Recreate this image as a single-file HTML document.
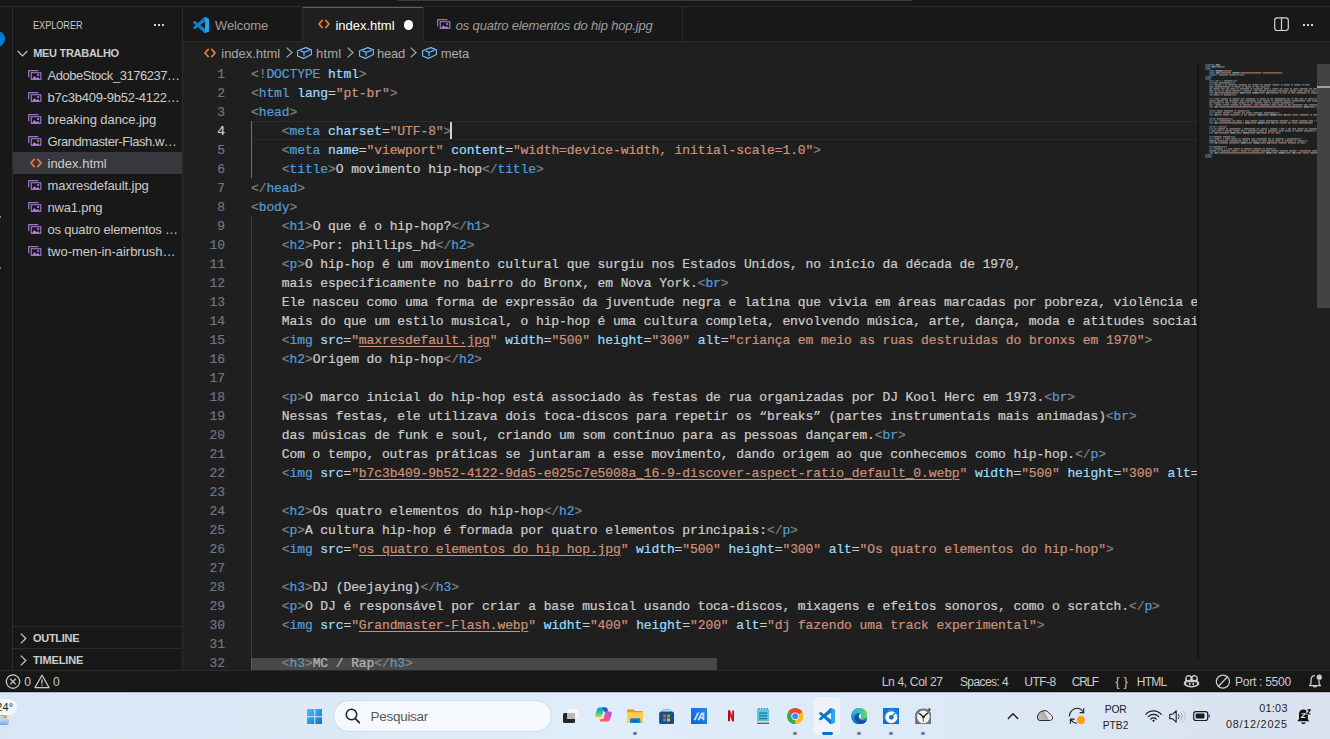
<!DOCTYPE html>
<html lang="pt-br">
<head>
<meta charset="UTF-8">
<title>index.html - meu trabalho - Visual Studio Code</title>
<style>
*{box-sizing:border-box;margin:0;padding:0}
html,body{width:1330px;height:739px;overflow:hidden;background:#181818}
body{position:relative;font-family:"Liberation Sans",sans-serif;font-size:13px;color:#ccc}
.abs{position:absolute}
.t{position:absolute;white-space:nowrap}
.dots{display:flex;gap:2px}
.dots i{display:block;width:2.2px;height:2.2px;background:#d4d4d4}
#titlebar{left:0;top:0;width:1330px;height:7px;background:#181818;border-bottom:1px solid #2b2b2b}
#cmd{left:397px;top:0;width:515px;height:1px;background:#3a3a3a}
#activity{left:0;top:7px;width:13px;height:663px;background:#181818;border-right:1px solid #2b2b2b;overflow:hidden}
#badge{left:-10.900px;top:24px;width:16px;height:15.600px;border-radius:50%;background:#0078d4}
#sidebar{left:13px;top:7px;width:170px;height:663px;background:#181818;border-right:1px solid #2b2b2b}
#editor{left:183px;top:7px;width:1147px;height:663px;background:#1f1f1f}
#status{left:0;top:670px;width:1330px;height:22px;background:#181818;border-top:1px solid #2b2b2b;border-bottom:1px solid #0e0e0e}
#taskbar{left:0;top:692px;width:1330px;height:47px;background:linear-gradient(90deg,#d7e7f5,#dfecf9 44%,#dde9f7 72%,#d9e2ee);border-top:1px solid #b3bac3}
/* code */
#codewrap{left:183px;top:64px;width:1014px;height:606px;overflow:hidden}
#nums{left:0;top:1px;width:42px;text-align:right;color:#6e7681}
#nums div,.ln{height:19px;line-height:19px;white-space:pre}
#nums .cur{color:#ccc}
#code{left:68px;top:1px;color:#ccc}
#nums,#code{font-family:"Liberation Mono",monospace;font-size:13px;letter-spacing:-0.1px;-webkit-text-stroke:0.22px}
.g{color:#808080}.k{color:#569cd6}.a{color:#9cdcfe}.s{color:#ce9178}.u{color:#ce9178;text-decoration:underline;text-underline-offset:2px}
#curline{left:68px;top:57px;width:950px;height:19px;border:1px solid #2a2a2a}
#cursor{left:267px;top:58px;width:2px;height:17px;background:#cfcfcf}
.guide{width:1px;background:#404040}
#mmshadow{left:1196.500px;top:64px;width:4px;height:594px;background:linear-gradient(90deg,rgba(0,0,0,.4),rgba(0,0,0,0))}
#vslider{left:1317px;top:64px;width:13px;height:244px;background:#434343}
#vmark{left:1317px;top:86px;width:13px;height:2px;background:#a0a0a0}
#hslider{left:251px;top:658px;width:466px;height:12px;background:rgba(140,140,140,.38)}
</style>
</head>
<body>
<div id="titlebar" class="abs"></div>
<div id="cmd" class="abs"></div>
<div id="activity" class="abs"><div id="badge" class="abs"></div><div class="abs" style="left:0;top:208.500px;width:1.200px;height:2.500px;background:#8a8a8a"></div><div class="abs" style="left:0;top:260px;width:1px;height:2px;background:#777"></div></div>
<div id="sidebar" class="abs"></div>
<div id="editor" class="abs"></div>
<span class="t" style="left:33.2px;top:17.0px;line-height:16px;font-size:11px;color:#ccc;transform:scaleX(0.8279);transform-origin:0 0;">EXPLORER</span>
<div class="abs dots" style="left:153.5px;top:23.7px"><i></i><i></i><i></i></div>
<svg class="abs" style="left:17.2px;top:49.7px" width="11" height="7" viewBox="0 0 11 7"><path d="M0.6 0.8L5.5 5.8L10.4 0.8" stroke="#ccc" stroke-width="1.2" fill="none"/></svg>
<span class="t" style="left:33.2px;top:44.6px;line-height:16px;font-size:11px;color:#ccc;font-weight:bold;letter-spacing:-0.293px;">MEU TRABALHO</span>
<div class="abs" style="left:13px;top:152px;width:169px;height:22px;background:#37373d"></div>
<svg class="abs" style="left:28.2px;top:69.7px" width="13.5" height="10.5" viewBox="0 0 13.5 10.5"><path d="M0.700 7.300V0.700H10.400" stroke="#a074c4" stroke-width="1.250" fill="none"/><rect x="3.300" y="2.700" width="9.500" height="7.200" stroke="#a074c4" stroke-width="1.150" fill="none"/><path d="M3.600 9.800L6.300 5.900L8.300 8.300L9.700 7.100L12.500 9.800Z" fill="#b180d7"/><rect x="9.200" y="4.100" width="1.900" height="1.800" fill="#b180d7"/></svg>
<span class="t" style="left:47.5px;top:65.9px;line-height:20px;font-size:13px;color:#ccc;letter-spacing:-0.471px;">AdobeStock_3176237…</span>
<svg class="abs" style="left:28.2px;top:91.7px" width="13.5" height="10.5" viewBox="0 0 13.5 10.5"><path d="M0.700 7.300V0.700H10.400" stroke="#a074c4" stroke-width="1.250" fill="none"/><rect x="3.300" y="2.700" width="9.500" height="7.200" stroke="#a074c4" stroke-width="1.150" fill="none"/><path d="M3.600 9.800L6.300 5.900L8.300 8.300L9.700 7.100L12.500 9.800Z" fill="#b180d7"/><rect x="9.200" y="4.100" width="1.900" height="1.800" fill="#b180d7"/></svg>
<span class="t" style="left:47.5px;top:87.9px;line-height:20px;font-size:13px;color:#ccc;letter-spacing:-0.243px;">b7c3b409-9b52-4122…</span>
<svg class="abs" style="left:28.2px;top:113.7px" width="13.5" height="10.5" viewBox="0 0 13.5 10.5"><path d="M0.700 7.300V0.700H10.400" stroke="#a074c4" stroke-width="1.250" fill="none"/><rect x="3.300" y="2.700" width="9.500" height="7.200" stroke="#a074c4" stroke-width="1.150" fill="none"/><path d="M3.600 9.800L6.300 5.900L8.300 8.300L9.700 7.100L12.500 9.800Z" fill="#b180d7"/><rect x="9.200" y="4.100" width="1.900" height="1.800" fill="#b180d7"/></svg>
<span class="t" style="left:47.5px;top:109.9px;line-height:20px;font-size:13px;color:#ccc;letter-spacing:-0.070px;">breaking dance.jpg</span>
<svg class="abs" style="left:28.2px;top:135.7px" width="13.5" height="10.5" viewBox="0 0 13.5 10.5"><path d="M0.700 7.300V0.700H10.400" stroke="#a074c4" stroke-width="1.250" fill="none"/><rect x="3.300" y="2.700" width="9.500" height="7.200" stroke="#a074c4" stroke-width="1.150" fill="none"/><path d="M3.600 9.800L6.300 5.900L8.300 8.300L9.700 7.100L12.500 9.800Z" fill="#b180d7"/><rect x="9.200" y="4.100" width="1.900" height="1.800" fill="#b180d7"/></svg>
<span class="t" style="left:47.5px;top:131.9px;line-height:20px;font-size:13px;color:#ccc;letter-spacing:-0.454px;">Grandmaster-Flash.w…</span>
<svg class="abs" style="left:29.5px;top:158px" width="12" height="10" viewBox="0 0 12 10"><path d="M4.7 0.9L1 5L4.7 9.1M7.3 0.9L11 5L7.3 9.1" stroke="#e37933" stroke-width="1.7" fill="none"/></svg>
<span class="t" style="left:47.5px;top:153.9px;line-height:20px;font-size:13px;color:#ccc;">index.html</span>
<svg class="abs" style="left:28.2px;top:179.7px" width="13.5" height="10.5" viewBox="0 0 13.5 10.5"><path d="M0.700 7.300V0.700H10.400" stroke="#a074c4" stroke-width="1.250" fill="none"/><rect x="3.300" y="2.700" width="9.500" height="7.200" stroke="#a074c4" stroke-width="1.150" fill="none"/><path d="M3.600 9.800L6.300 5.900L8.300 8.300L9.700 7.100L12.500 9.800Z" fill="#b180d7"/><rect x="9.200" y="4.100" width="1.900" height="1.800" fill="#b180d7"/></svg>
<span class="t" style="left:47.5px;top:175.9px;line-height:20px;font-size:13px;color:#ccc;letter-spacing:-0.083px;">maxresdefault.jpg</span>
<svg class="abs" style="left:28.2px;top:201.7px" width="13.5" height="10.5" viewBox="0 0 13.5 10.5"><path d="M0.700 7.300V0.700H10.400" stroke="#a074c4" stroke-width="1.250" fill="none"/><rect x="3.300" y="2.700" width="9.500" height="7.200" stroke="#a074c4" stroke-width="1.150" fill="none"/><path d="M3.600 9.800L6.300 5.900L8.300 8.300L9.700 7.100L12.500 9.800Z" fill="#b180d7"/><rect x="9.200" y="4.100" width="1.900" height="1.800" fill="#b180d7"/></svg>
<span class="t" style="left:47.5px;top:197.9px;line-height:20px;font-size:13px;color:#ccc;letter-spacing:-0.185px;">nwa1.png</span>
<svg class="abs" style="left:28.2px;top:223.7px" width="13.5" height="10.5" viewBox="0 0 13.5 10.5"><path d="M0.700 7.300V0.700H10.400" stroke="#a074c4" stroke-width="1.250" fill="none"/><rect x="3.300" y="2.700" width="9.500" height="7.200" stroke="#a074c4" stroke-width="1.150" fill="none"/><path d="M3.600 9.800L6.300 5.900L8.300 8.300L9.700 7.100L12.500 9.800Z" fill="#b180d7"/><rect x="9.200" y="4.100" width="1.900" height="1.800" fill="#b180d7"/></svg>
<span class="t" style="left:47.5px;top:219.9px;line-height:20px;font-size:13px;color:#ccc;letter-spacing:-0.191px;">os quatro elementos …</span>
<svg class="abs" style="left:28.2px;top:245.7px" width="13.5" height="10.5" viewBox="0 0 13.5 10.5"><path d="M0.700 7.300V0.700H10.400" stroke="#a074c4" stroke-width="1.250" fill="none"/><rect x="3.300" y="2.700" width="9.500" height="7.200" stroke="#a074c4" stroke-width="1.150" fill="none"/><path d="M3.600 9.800L6.300 5.900L8.300 8.300L9.700 7.100L12.500 9.800Z" fill="#b180d7"/><rect x="9.200" y="4.100" width="1.900" height="1.800" fill="#b180d7"/></svg>
<span class="t" style="left:47.5px;top:241.9px;line-height:20px;font-size:13px;color:#ccc;letter-spacing:-0.030px;">two-men-in-airbrush…</span>
<div class="abs" style="left:13px;top:626px;width:169px;height:1px;background:#2b2b2b"></div>
<div class="abs" style="left:13px;top:648px;width:169px;height:1px;background:#2b2b2b"></div>
<svg class="abs" style="left:19.7px;top:632.5px" width="7" height="11" viewBox="0 0 7 11"><path d="M0.8 0.6L5.8 5.5L0.8 10.4" stroke="#ccc" stroke-width="1.2" fill="none"/></svg>
<svg class="abs" style="left:19.7px;top:654.5px" width="7" height="11" viewBox="0 0 7 11"><path d="M0.8 0.6L5.8 5.5L0.8 10.4" stroke="#ccc" stroke-width="1.2" fill="none"/></svg>
<span class="t" style="left:33.0px;top:630.1px;line-height:16px;font-size:11px;color:#ccc;font-weight:bold;letter-spacing:-0.297px;">OUTLINE</span>
<span class="t" style="left:33.0px;top:652.2px;line-height:16px;font-size:11px;color:#ccc;font-weight:bold;letter-spacing:-0.154px;">TIMELINE</span>
<div class="abs" style="left:183px;top:7px;width:1147px;height:35px;background:#181818;border-bottom:1px solid #2b2b2b"></div>
<div class="abs" style="left:302px;top:7px;width:1px;height:34px;background:#2b2b2b"></div>
<svg class="abs" style="left:193px;top:16.8px" width="16.2" height="16.2" viewBox="0 0 100 100"><path d="M96.5 10.8L75.9 0.9c-2.4-1.2-5.2-0.7-7.1 1.2L29.4 38.1 12.2 25c-1.6-1.2-3.8-1.1-5.3 0.2l-5.500 5c-1.8 1.700-1.800 4.500 0 6.200L16.300 50 1.400 63.600c-1.800 1.700-1.800 4.500 0 6.200l5.500 5c1.500 1.400 3.700 1.500 5.300 0.200l17.200-13 39.400 36c1.900 1.900 4.700 2.400 7.100 1.200l20.600-9.900c2.200-1 3.500-3.200 3.500-5.600V16.400c0-2.400-1.400-4.600-3.500-5.600zM75 72.700L45.100 50 75 27.300z" fill="#0f7fce"/><path d="M68.800 97.900c1.900 1.900 4.700 2.400 7.100 1.200l20.600-9.900c2.200-1 3.500-3.200 3.500-5.600V16.400c0-2.400-1.400-4.600-3.500-5.600L75.900 0.900c-2.400-1.200-5.200-0.700-7.100 1.200 2.300-2.300 6.200-0.700 6.200 2.600v90.600c0 3.300-3.900 4.900-6.200 2.600z" fill="#22a5f1"/></svg>
<span class="t" style="left:215.1px;top:16.1px;line-height:20px;font-size:13px;color:#9d9d9d;letter-spacing:-0.135px;">Welcome</span>
<div class="abs" style="left:303px;top:7px;width:120px;height:35px;background:#1f1f1f;border-top:1px solid #0078d4"></div>
<div class="abs" style="left:423px;top:7px;width:1px;height:34px;background:#2b2b2b"></div>
<svg class="abs" style="left:317.5px;top:19.3px" width="12" height="10" viewBox="0 0 12 10"><path d="M4.7 0.9L1 5L4.7 9.1M7.3 0.9L11 5L7.3 9.1" stroke="#e37933" stroke-width="1.7" fill="none"/></svg>
<span class="t" style="left:335.5px;top:16.1px;line-height:20px;font-size:13px;color:#fff;letter-spacing:-0.025px;">index.html</span>
<div class="abs" style="left:404.3px;top:20.4px;width:9.2px;height:9.2px;border-radius:50%;background:#fff"></div>
<svg class="abs" style="left:437.2px;top:18.7px" width="13.5" height="10.5" viewBox="0 0 13.5 10.5"><path d="M0.700 7.300V0.700H10.400" stroke="#a074c4" stroke-width="1.250" fill="none"/><rect x="3.300" y="2.700" width="9.500" height="7.200" stroke="#a074c4" stroke-width="1.150" fill="none"/><path d="M3.600 9.800L6.300 5.900L8.300 8.300L9.700 7.100L12.500 9.800Z" fill="#b180d7"/><rect x="9.200" y="4.100" width="1.900" height="1.800" fill="#b180d7"/></svg>
<span class="t" style="left:455.8px;top:16.1px;line-height:20px;font-size:13px;color:#9d9d9d;font-style:italic;letter-spacing:-0.185px;">os quatro elementos do hip hop.jpg</span>
<div class="abs" style="left:682px;top:7px;width:1px;height:34px;background:#2b2b2b"></div>
<svg class="abs" style="left:1274.1px;top:17.4px" width="15" height="15" viewBox="0 0 15 15"><rect x="0.7" y="0.9" width="13.6" height="12.6" rx="2.4" stroke="#d4d4d4" stroke-width="1.2" fill="none"/><path d="M7.5 1V13.400" stroke="#d4d4d4" stroke-width="1.2"/></svg>
<div class="abs dots" style="left:1302.6px;top:24px"><i></i><i></i><i></i></div>
<svg class="abs" style="left:203.5px;top:47.8px" width="12" height="10" viewBox="0 0 12 10"><path d="M4.7 0.9L1 5L4.7 9.1M7.3 0.9L11 5L7.3 9.1" stroke="#e37933" stroke-width="1.7" fill="none"/></svg>
<span class="t" style="left:221.3px;top:44.1px;line-height:20px;font-size:13px;color:#a9a9a9;letter-spacing:-0.035px;">index.html</span>
<svg class="abs" style="left:285.8px;top:47.4px" width="7" height="11" viewBox="0 0 7 11"><path d="M0.600 0.600L6 5.500L0.600 10.400" stroke="#a9a9a9" stroke-width="1.200" fill="none"/></svg>
<svg class="abs" style="left:297px;top:47px" width="15" height="12" viewBox="0 0 15 12"><path d="M8.800 0.600L14.400 2.900V7.400L6.400 11.400L0.600 9V3.700ZM3.600 3.900L7 5.300L12.400 3.400M7 5.300V9.200" stroke="#75beff" stroke-width="1.150" fill="none" stroke-linejoin="round"/></svg>
<span class="t" style="left:316.0px;top:44.1px;line-height:20px;font-size:13px;color:#a9a9a9;letter-spacing:0.185px;">html</span>
<svg class="abs" style="left:346.9px;top:47.4px" width="7" height="11" viewBox="0 0 7 11"><path d="M0.600 0.600L6 5.500L0.600 10.400" stroke="#a9a9a9" stroke-width="1.200" fill="none"/></svg>
<svg class="abs" style="left:358.5px;top:47px" width="15" height="12" viewBox="0 0 15 12"><path d="M8.800 0.600L14.400 2.900V7.400L6.400 11.400L0.600 9V3.700ZM3.600 3.900L7 5.300L12.400 3.400M7 5.300V9.200" stroke="#75beff" stroke-width="1.150" fill="none" stroke-linejoin="round"/></svg>
<span class="t" style="left:377.1px;top:44.1px;line-height:20px;font-size:13px;color:#a9a9a9;letter-spacing:-0.280px;">head</span>
<svg class="abs" style="left:410.1px;top:47.4px" width="7" height="11" viewBox="0 0 7 11"><path d="M0.600 0.600L6 5.500L0.600 10.400" stroke="#a9a9a9" stroke-width="1.200" fill="none"/></svg>
<svg class="abs" style="left:421.8px;top:47px" width="15" height="12" viewBox="0 0 15 12"><path d="M8.800 0.600L14.400 2.900V7.400L6.400 11.400L0.600 9V3.700ZM3.600 3.900L7 5.300L12.400 3.400M7 5.300V9.200" stroke="#75beff" stroke-width="1.150" fill="none" stroke-linejoin="round"/></svg>
<span class="t" style="left:440.7px;top:44.1px;line-height:20px;font-size:13px;color:#a9a9a9;letter-spacing:-0.125px;">meta</span>
<div id="codewrap" class="abs">
<div id="curline" class="abs"></div>
<div class="abs guide" style="left:68px;top:57px;height:57px;background:#707070"></div>
<div class="abs guide" style="left:68px;top:152px;height:460px"></div>
<div id="nums" class="abs"><div>1</div><div>2</div><div>3</div><div class=cur>4</div><div>5</div><div>6</div><div>7</div><div>8</div><div>9</div><div>10</div><div>11</div><div>12</div><div>13</div><div>14</div><div>15</div><div>16</div><div>17</div><div>18</div><div>19</div><div>20</div><div>21</div><div>22</div><div>23</div><div>24</div><div>25</div><div>26</div><div>27</div><div>28</div><div>29</div><div>30</div><div>31</div><div>32</div></div>
<div id="code" class="abs">
<div class="ln"><span class="g">&lt;!</span><span class="k">DOCTYPE</span> <span class="a">html</span><span class="g">&gt;</span></div>
<div class="ln"><span class="g">&lt;</span><span class="k">html</span> <span class="a">lang</span>=<span class="s">"pt-br"</span><span class="g">&gt;</span></div>
<div class="ln"><span class="g">&lt;</span><span class="k">head</span><span class="g">&gt;</span></div>
<div class="ln">    <span class="g">&lt;</span><span class="k">meta</span> <span class="a">charset</span>=<span class="s">"UTF-8"</span><span class="g">&gt;</span></div>
<div class="ln">    <span class="g">&lt;</span><span class="k">meta</span> <span class="a">name</span>=<span class="s">"viewport"</span> <span class="a">content</span>=<span class="s">"width=device-width, initial-scale=1.0"</span><span class="g">&gt;</span></div>
<div class="ln">    <span class="g">&lt;</span><span class="k">title</span><span class="g">&gt;</span>O movimento hip-hop<span class="g">&lt;/</span><span class="k">title</span><span class="g">&gt;</span></div>
<div class="ln"><span class="g">&lt;/</span><span class="k">head</span><span class="g">&gt;</span></div>
<div class="ln"><span class="g">&lt;</span><span class="k">body</span><span class="g">&gt;</span></div>
<div class="ln">    <span class="g">&lt;</span><span class="k">h1</span><span class="g">&gt;</span>O que é o hip-hop?<span class="g">&lt;/</span><span class="k">h1</span><span class="g">&gt;</span></div>
<div class="ln">    <span class="g">&lt;</span><span class="k">h2</span><span class="g">&gt;</span>Por: phillips_hd<span class="g">&lt;/</span><span class="k">h2</span><span class="g">&gt;</span></div>
<div class="ln">    <span class="g">&lt;</span><span class="k">p</span><span class="g">&gt;</span>O hip-hop é um movimento cultural que surgiu nos Estados Unidos, no início da década de 1970,</div>
<div class="ln">    mais especificamente no bairro do Bronx, em Nova York.<span class="g">&lt;</span><span class="k">br</span><span class="g">&gt;</span></div>
<div class="ln">    Ele nasceu como uma forma de expressão da juventude negra e latina que vivia em áreas marcadas por pobreza, violência e exclusão social.<span class="g">&lt;</span><span class="k">br</span><span class="g">&gt;</span></div>
<div class="ln">    Mais do que um estilo musical, o hip-hop é uma cultura completa, envolvendo música, arte, dança, moda e atitudes sociais.<span class="g">&lt;/</span><span class="k">p</span><span class="g">&gt;</span></div>
<div class="ln">    <span class="g">&lt;</span><span class="k">img</span> <span class="a">src</span>=<span class="s">"</span><span class="u">maxresdefault.jpg</span><span class="s">"</span> <span class="a">width</span>=<span class="s">"500"</span> <span class="a">height</span>=<span class="s">"300"</span> <span class="a">alt</span>=<span class="s">"criança em meio as ruas destruidas do bronxs em 1970"</span><span class="g">&gt;</span></div>
<div class="ln">    <span class="g">&lt;</span><span class="k">h2</span><span class="g">&gt;</span>Origem do hip-hop<span class="g">&lt;/</span><span class="k">h2</span><span class="g">&gt;</span></div>
<div class="ln"></div>
<div class="ln">    <span class="g">&lt;</span><span class="k">p</span><span class="g">&gt;</span>O marco inicial do hip-hop está associado às festas de rua organizadas por DJ Kool Herc em 1973.<span class="g">&lt;</span><span class="k">br</span><span class="g">&gt;</span></div>
<div class="ln">    Nessas festas, ele utilizava dois toca-discos para repetir os “breaks” (partes instrumentais mais animadas)<span class="g">&lt;</span><span class="k">br</span><span class="g">&gt;</span></div>
<div class="ln">    das músicas de funk e soul, criando um som contínuo para as pessoas dançarem.<span class="g">&lt;</span><span class="k">br</span><span class="g">&gt;</span></div>
<div class="ln">    Com o tempo, outras práticas se juntaram a esse movimento, dando origem ao que conhecemos como hip-hop.<span class="g">&lt;/</span><span class="k">p</span><span class="g">&gt;</span></div>
<div class="ln">    <span class="g">&lt;</span><span class="k">img</span> <span class="a">src</span>=<span class="s">"</span><span class="u">b7c3b409-9b52-4122-9da5-e025c7e5008a_16-9-discover-aspect-ratio_default_0.webp</span><span class="s">"</span> <span class="a">width</span>=<span class="s">"500"</span> <span class="a">height</span>=<span class="s">"300"</span> <span class="a">alt</span>=<span class="s">"DJ Kool Herc tocando em uma festa de rua"</span><span class="g">&gt;</span></div>
<div class="ln"></div>
<div class="ln">    <span class="g">&lt;</span><span class="k">h2</span><span class="g">&gt;</span>Os quatro elementos do hip-hop<span class="g">&lt;/</span><span class="k">h2</span><span class="g">&gt;</span></div>
<div class="ln">    <span class="g">&lt;</span><span class="k">p</span><span class="g">&gt;</span>A cultura hip-hop é formada por quatro elementos principais:<span class="g">&lt;/</span><span class="k">p</span><span class="g">&gt;</span></div>
<div class="ln">    <span class="g">&lt;</span><span class="k">img</span> <span class="a">src</span>=<span class="s">"</span><span class="u">os quatro elementos do hip hop.jpg</span><span class="s">"</span> <span class="a">width</span>=<span class="s">"500"</span> <span class="a">height</span>=<span class="s">"300"</span> <span class="a">alt</span>=<span class="s">"Os quatro elementos do hip-hop"</span><span class="g">&gt;</span></div>
<div class="ln"></div>
<div class="ln">    <span class="g">&lt;</span><span class="k">h3</span><span class="g">&gt;</span>DJ (Deejaying)<span class="g">&lt;/</span><span class="k">h3</span><span class="g">&gt;</span></div>
<div class="ln">    <span class="g">&lt;</span><span class="k">p</span><span class="g">&gt;</span>O DJ é responsável por criar a base musical usando toca-discos, mixagens e efeitos sonoros, como o scratch.<span class="g">&lt;/</span><span class="k">p</span><span class="g">&gt;</span></div>
<div class="ln">    <span class="g">&lt;</span><span class="k">img</span> <span class="a">src</span>=<span class="s">"</span><span class="u">Grandmaster-Flash.webp</span><span class="s">"</span> <span class="a">widht</span>=<span class="s">"400"</span> <span class="a">height</span>=<span class="s">"200"</span> <span class="a">alt</span>=<span class="s">"dj fazendo uma track experimental"</span><span class="g">&gt;</span></div>
<div class="ln"></div>
<div class="ln">    <span class="g">&lt;</span><span class="k">h3</span><span class="g">&gt;</span>MC / Rap<span class="g">&lt;/</span><span class="k">h3</span><span class="g">&gt;</span></div>
</div>
<div id="cursor" class="abs"></div>
</div>
<div id="hslider" class="abs"></div>
<div id="mmshadow" class="abs"></div>
<svg class="abs" style="left:1205px;top:64px" width="112" height="96" viewBox="0 0 112 96">
<path d="M10.6 2.85h0.8M18.0 6.85h0.8M14.8 8.85h0.8M34.8 8.85h0.8M11.7 10.85h0.8M13.8 10.85h9.2M24.3 10.85h7.1M8.5 16.85h0.8M10.6 16.85h2.9M14.8 16.85h0.8M16.9 16.85h0.8M19.0 16.85h8.2M8.5 18.85h4.0M13.8 18.85h11.3M7.5 20.85h0.8M9.6 20.85h7.1M18.0 20.85h0.8M20.1 20.85h1.9M23.2 20.85h9.2M33.7 20.85h8.2M43.2 20.85h2.9M47.4 20.85h6.1M54.7 20.85h2.9M58.9 20.85h7.1M67.3 20.85h7.1M75.7 20.85h1.9M78.8 20.85h6.1M86.2 20.85h1.9M89.3 20.85h6.1M96.7 20.85h1.9M99.8 20.85h5.0M4.3 22.85h4.0M9.6 22.85h15.5M26.4 22.85h1.9M29.5 22.85h6.1M36.9 22.85h1.9M40.0 22.85h6.1M47.4 22.85h1.9M50.5 22.85h4.0M55.8 22.85h5.0M4.3 24.85h2.9M8.5 24.85h6.1M15.8 24.85h4.0M21.1 24.85h2.9M25.3 24.85h5.0M31.6 24.85h1.9M34.8 24.85h9.2M45.2 24.85h1.9M48.4 24.85h9.2M58.9 24.85h5.0M65.2 24.85h0.8M67.3 24.85h6.1M74.6 24.85h2.9M78.8 24.85h5.0M85.1 24.85h1.9M88.3 24.85h5.0M94.6 24.85h8.2M104.0 24.85h2.9M108.2 24.85h4.8M4.3 26.85h4.0M9.6 26.85h1.9M12.7 26.85h2.9M16.9 26.85h1.9M20.1 26.85h6.1M27.4 26.85h8.2M36.9 26.85h0.8M39.0 26.85h7.1M47.4 26.85h0.8M49.5 26.85h2.9M53.7 26.85h7.1M62.1 26.85h9.2M72.5 26.85h10.2M84.1 26.85h7.1M92.5 26.85h5.0M98.8 26.85h6.1M106.2 26.85h4.0M111.4 26.85h0.8M12.7 28.85h0.8M40.0 28.85h0.8M53.7 28.85h0.8M64.1 28.85h0.8M8.5 30.85h6.1M15.8 30.85h1.9M19.0 30.85h7.1M7.5 34.85h0.8M9.6 34.85h5.0M15.8 34.85h7.1M24.3 34.85h1.9M27.4 34.85h7.1M35.8 34.85h4.0M41.1 34.85h9.2M51.6 34.85h1.9M54.7 34.85h6.1M62.1 34.85h1.9M65.2 34.85h2.9M69.4 34.85h11.3M82.0 34.85h2.9M86.2 34.85h1.9M89.3 34.85h4.0M94.6 34.85h4.0M99.8 34.85h1.9M103.0 34.85h5.0M4.3 36.85h6.1M11.7 36.85h7.1M20.1 36.85h2.9M24.3 36.85h9.2M34.8 36.85h4.0M40.0 36.85h11.3M52.6 36.85h4.0M57.9 36.85h7.1M66.2 36.85h1.9M69.4 36.85h8.2M78.8 36.85h7.1M87.2 36.85h13.4M102.0 36.85h4.0M107.2 36.85h5.8M4.3 38.85h2.9M8.5 38.85h7.1M16.9 38.85h1.9M20.1 38.85h4.0M25.3 38.85h0.8M27.4 38.85h5.0M33.7 38.85h7.1M42.1 38.85h1.9M45.2 38.85h2.9M49.5 38.85h8.2M58.9 38.85h4.0M64.1 38.85h1.9M67.3 38.85h7.1M75.7 38.85h9.2M4.3 40.85h2.9M8.5 40.85h0.8M10.6 40.85h6.1M18.0 40.85h6.1M25.3 40.85h8.2M34.8 40.85h1.9M37.9 40.85h8.2M47.4 40.85h0.8M49.5 40.85h4.0M54.7 40.85h10.2M66.2 40.85h5.0M72.5 40.85h6.1M79.9 40.85h1.9M83.0 40.85h2.9M87.2 40.85h10.2M98.8 40.85h4.0M104.0 40.85h8.2M12.7 42.85h0.8M104.0 42.85h0.8M8.5 46.85h1.9M11.7 46.85h6.1M19.0 46.85h9.2M29.5 46.85h1.9M32.7 46.85h7.1M7.5 48.85h0.8M9.6 48.85h7.1M18.0 48.85h7.1M26.4 48.85h0.8M28.5 48.85h7.1M36.9 48.85h2.9M41.1 48.85h6.1M48.4 48.85h9.2M58.9 48.85h11.3M12.7 50.85h0.8M57.9 50.85h0.8M71.5 50.85h0.8M82.0 50.85h0.8M8.5 54.85h1.9M11.7 54.85h11.3M7.5 56.85h0.8M9.6 56.85h1.9M12.7 56.85h0.8M14.8 56.85h11.3M27.4 56.85h2.9M31.6 56.85h5.0M37.9 56.85h0.8M40.0 56.85h4.0M45.2 56.85h7.1M53.7 56.85h6.1M61.0 56.85h12.4M74.6 56.85h8.2M84.1 56.85h0.8M86.2 56.85h7.1M94.6 56.85h8.2M104.0 56.85h4.0M109.3 56.85h0.8M111.4 56.85h1.6M12.7 58.85h0.8M45.2 58.85h0.8M58.9 58.85h0.8M69.4 58.85h0.8M8.5 62.85h1.9M11.7 62.85h0.8M13.8 62.85h2.9M7.5 64.85h0.8M9.6 64.85h1.9M12.7 64.85h7.1M21.1 64.85h1.9M24.3 64.85h11.3M36.9 64.85h0.8M39.0 64.85h11.3M51.6 64.85h2.9M55.8 64.85h6.1M63.1 64.85h0.8M65.2 64.85h7.1M73.6 64.85h0.8M75.7 64.85h4.0M81.0 64.85h0.8M83.0 64.85h2.9M87.2 64.85h4.0M92.5 64.85h6.1M99.8 64.85h2.9M104.0 64.85h9.0M4.3 66.85h0.8M6.4 66.85h4.0M11.7 66.85h5.0M18.0 66.85h0.8M20.1 66.85h7.1M28.5 66.85h6.1M35.8 66.85h4.0M41.1 66.85h0.8M43.2 66.85h9.2M53.7 66.85h5.0M60.0 66.85h1.9M63.1 66.85h9.2M73.6 66.85h5.0M79.9 66.85h6.1M87.2 66.85h1.9M90.4 66.85h7.1M98.8 66.85h8.2M12.7 68.85h0.8M30.6 68.85h0.8M44.2 68.85h0.8M54.7 68.85h0.8M8.5 72.85h8.2M18.0 72.85h7.1M7.5 74.85h0.8M9.6 74.85h5.0M15.8 74.85h0.8M18.0 74.85h0.8M20.1 74.85h5.0M26.4 74.85h6.1M33.7 74.85h1.9M36.9 74.85h8.2M46.3 74.85h4.0M51.6 74.85h10.2M63.1 74.85h2.9M67.3 74.85h1.9M70.5 74.85h8.2M79.9 74.85h0.8M82.0 74.85h10.2M4.3 76.85h7.1M12.7 76.85h10.2M24.3 76.85h12.4M37.9 76.85h5.0M44.2 76.85h0.8M46.3 76.85h6.1M53.7 76.85h1.9M56.8 76.85h5.0M63.1 76.85h6.1M70.5 76.85h5.0M76.8 76.85h1.9M79.9 76.85h8.2M89.3 76.85h1.9M92.5 76.85h6.1M12.7 78.85h0.8M41.1 78.85h0.8M54.7 78.85h0.8M65.2 78.85h0.8M8.5 82.85h8.2M7.5 84.85h0.8M9.6 84.85h8.2M19.0 84.85h0.8M21.1 84.85h0.8M23.2 84.85h4.0M28.5 84.85h6.1M35.8 84.85h1.9M39.0 84.85h8.2M48.4 84.85h8.2M57.9 84.85h1.9M61.0 84.85h6.1M4.3 86.85h7.1M12.7 86.85h1.9M15.8 86.85h9.2M26.4 86.85h6.1M33.7 86.85h0.8M35.8 86.85h6.1M43.2 86.85h1.9M46.3 86.85h8.2M55.8 86.85h9.2M66.2 86.85h7.1M74.6 86.85h8.2M84.1 86.85h7.1M92.5 86.85h0.8M94.6 86.85h11.3M107.2 86.85h5.8M12.7 88.85h0.8M66.2 88.85h0.8M79.9 88.85h0.8M90.4 88.85h0.8" stroke="#cccccc" stroke-width="1.45" opacity="0.56" fill="none"/>
<path d="M0.1 0.85h1.9M14.8 0.85h0.8M0.1 2.85h0.8M19.0 2.85h0.8M0.1 4.85h0.8M5.3 4.85h0.8M4.3 6.85h0.8M26.4 6.85h0.8M4.3 8.85h0.8M76.8 8.85h0.8M4.3 10.85h0.8M10.6 10.85h0.8M31.6 10.85h1.9M39.0 10.85h0.8M0.1 12.85h1.9M6.4 12.85h0.8M0.1 14.85h0.8M5.3 14.85h0.8M4.3 16.85h0.8M7.5 16.85h0.8M27.4 16.85h1.9M31.6 16.85h0.8M4.3 18.85h0.8M7.5 18.85h0.8M25.3 18.85h1.9M29.5 18.85h0.8M4.3 20.85h0.8M6.4 20.85h0.8M61.0 22.85h0.8M64.1 22.85h0.8M4.3 28.85h0.8M4.3 30.85h0.8M7.5 30.85h0.8M26.4 30.85h1.9M30.6 30.85h0.8M4.3 34.85h0.8M6.4 34.85h0.8M108.2 34.85h0.8M111.4 34.85h0.8M85.1 38.85h0.8M88.3 38.85h0.8M112.5 40.85h0.5M4.3 42.85h0.8M4.3 46.85h0.8M7.5 46.85h0.8M40.0 46.85h1.9M44.2 46.85h0.8M4.3 48.85h0.8M6.4 48.85h0.8M70.5 48.85h1.9M73.6 48.85h0.8M4.3 50.85h0.8M4.3 54.85h0.8M7.5 54.85h0.8M23.2 54.85h1.9M27.4 54.85h0.8M4.3 56.85h0.8M6.4 56.85h0.8M4.3 58.85h0.8M107.2 58.85h0.8M4.3 62.85h0.8M7.5 62.85h0.8M16.9 62.85h1.9M21.1 62.85h0.8M4.3 64.85h0.8M6.4 64.85h0.8M107.2 66.85h1.9M110.3 66.85h0.8M4.3 68.85h0.8M74.6 68.85h0.8M4.3 72.85h0.8M7.5 72.85h0.8M25.3 72.85h1.9M29.5 72.85h0.8M4.3 74.85h0.8M6.4 74.85h0.8M92.5 74.85h0.8M95.6 74.85h0.8M98.8 76.85h1.9M102.0 76.85h0.8M4.3 78.85h0.8M99.8 78.85h0.8M4.3 82.85h0.8M7.5 82.85h0.8M16.9 82.85h1.9M21.1 82.85h0.8M4.3 84.85h0.8M6.4 84.85h0.8M67.3 84.85h0.8M70.5 84.85h0.8M4.3 88.85h0.8M0.1 90.85h1.9M6.4 90.85h0.8M0.1 92.85h1.9M6.4 92.85h0.8" stroke="#808080" stroke-width="1.45" opacity="0.78" fill="none"/>
<path d="M2.2 0.85h7.1M1.2 2.85h4.0M1.2 4.85h4.0M5.3 6.85h4.0M5.3 8.85h4.0M5.3 10.85h5.0M33.7 10.85h5.0M2.2 12.85h4.0M1.2 14.85h4.0M5.3 16.85h1.9M29.5 16.85h1.9M5.3 18.85h1.9M27.4 18.85h1.9M5.3 20.85h0.8M62.1 22.85h1.9M5.3 28.85h2.9M5.3 30.85h1.9M28.5 30.85h1.9M5.3 34.85h0.8M109.3 34.85h1.9M86.2 38.85h1.9M5.3 42.85h2.9M5.3 46.85h1.9M42.1 46.85h1.9M5.3 48.85h0.8M72.5 48.85h0.8M5.3 50.85h2.9M5.3 54.85h1.9M25.3 54.85h1.9M5.3 56.85h0.8M5.3 58.85h2.9M5.3 62.85h1.9M19.0 62.85h1.9M5.3 64.85h0.8M109.3 66.85h0.8M5.3 68.85h2.9M5.3 72.85h1.9M27.4 72.85h1.9M5.3 74.85h0.8M93.5 74.85h1.9M100.9 76.85h0.8M5.3 78.85h2.9M5.3 82.85h1.9M19.0 82.85h1.9M5.3 84.85h0.8M68.3 84.85h1.9M5.3 88.85h2.9M2.2 90.85h4.0M2.2 92.85h4.0" stroke="#569cd6" stroke-width="1.45" opacity="0.78" fill="none"/>
<path d="M10.6 0.85h4.0M6.4 2.85h4.0M10.6 6.85h7.1M10.6 8.85h4.0M27.4 8.85h7.1M9.6 28.85h2.9M34.8 28.85h5.0M47.4 28.85h6.1M61.0 28.85h2.9M9.6 42.85h2.9M98.8 42.85h5.0M111.4 42.85h1.6M9.6 50.85h2.9M52.6 50.85h5.0M65.2 50.85h6.1M78.8 50.85h2.9M9.6 58.85h2.9M40.0 58.85h5.0M52.6 58.85h6.1M66.2 58.85h2.9M9.6 68.85h2.9M25.3 68.85h5.0M37.9 68.85h6.1M51.6 68.85h2.9M9.6 78.85h2.9M35.8 78.85h5.0M48.4 78.85h6.1M62.1 78.85h2.9M9.6 88.85h2.9M61.0 88.85h5.0M73.6 88.85h6.1M87.2 88.85h2.9" stroke="#9cdcfe" stroke-width="1.45" opacity="0.78" fill="none"/>
<path d="M11.7 2.85h7.1M19.0 6.85h7.1M15.8 8.85h10.2M35.8 8.85h20.8M57.9 8.85h18.7M13.8 28.85h0.8M32.7 28.85h0.8M41.1 28.85h5.0M54.7 28.85h5.0M65.2 28.85h8.2M74.6 28.85h1.9M77.8 28.85h4.0M83.0 28.85h1.9M86.2 28.85h4.0M91.5 28.85h10.2M103.0 28.85h1.9M106.2 28.85h6.1M13.8 42.85h0.8M96.7 42.85h0.8M105.1 42.85h5.0M13.8 50.85h0.8M50.5 50.85h0.8M58.9 50.85h5.0M72.5 50.85h5.0M83.0 50.85h2.9M87.2 50.85h6.1M94.6 50.85h9.2M105.1 50.85h1.9M108.2 50.85h4.8M13.8 58.85h0.8M37.9 58.85h0.8M46.3 58.85h5.0M60.0 58.85h5.0M70.5 58.85h2.9M74.6 58.85h7.1M83.0 58.85h2.9M87.2 58.85h5.0M93.5 58.85h13.4M13.8 68.85h0.8M23.2 68.85h0.8M31.6 68.85h5.0M45.2 68.85h5.0M55.8 68.85h6.1M63.1 68.85h1.9M66.2 68.85h2.9M70.5 68.85h4.0M13.8 78.85h0.8M33.7 78.85h0.8M42.1 78.85h5.0M55.8 78.85h5.0M66.2 78.85h6.1M73.6 78.85h8.2M83.0 78.85h8.2M92.5 78.85h1.9M95.6 78.85h4.0M13.8 88.85h0.8M58.9 88.85h0.8M67.3 88.85h5.0M81.0 88.85h5.0M91.5 88.85h5.0M97.8 88.85h6.1M105.1 88.85h7.1" stroke="#ce9178" stroke-width="1.45" opacity="0.78" fill="none"/>
<path d="M14.8 28.85h17.6M14.8 42.85h81.7M14.8 50.85h1.9M18.0 50.85h6.1M25.3 50.85h9.2M35.8 50.85h1.9M39.0 50.85h2.9M43.2 50.85h7.1M14.8 58.85h22.9M14.8 68.85h8.2M14.8 78.85h8.2M24.3 78.85h9.2M14.8 88.85h43.9" stroke="#ce9178" stroke-width="1.45" opacity="0.78" fill="none"/>
</svg>
<div id="vslider" class="abs"></div>
<div id="vmark" class="abs"></div>
<div id="status" class="abs"></div>
<svg class="abs" style="left:5px;top:673.5px" width="16" height="16" viewBox="0 0 16 16"><circle cx="8" cy="7.6" r="6.7" stroke="#ccc" stroke-width="1.25" fill="none"/><path d="M5.2 4.800L10.800 10.400M10.800 4.800L5.200 10.400" stroke="#ccc" stroke-width="1.25"/></svg>
<span class="t" style="left:24.2px;top:673.2px;line-height:18px;font-size:12px;color:#ccc;letter-spacing:0.426px;">0</span>
<svg class="abs" style="left:34px;top:673.5px" width="16" height="15" viewBox="0 0 16 15"><path d="M8 1.200L15 13.500H1Z" stroke="#ccc" stroke-width="1.25" fill="none" stroke-linejoin="round"/><path d="M8 5.500V9.800M8 10.800V12" stroke="#ccc" stroke-width="1.200"/></svg>
<span class="t" style="left:53.0px;top:673.2px;line-height:18px;font-size:12px;color:#ccc;letter-spacing:0.426px;">0</span>
<span class="t" style="left:881.7px;top:673.2px;line-height:18px;font-size:12px;color:#ccc;letter-spacing:-0.309px;">Ln 4, Col 27</span>
<span class="t" style="left:959.9px;top:673.2px;line-height:18px;font-size:12px;color:#ccc;letter-spacing:-0.574px;">Spaces: 4</span>
<span class="t" style="left:1024.3px;top:673.2px;line-height:18px;font-size:12px;color:#ccc;letter-spacing:-0.539px;">UTF-8</span>
<span class="t" style="left:1071.8px;top:673.2px;line-height:18px;font-size:12px;color:#ccc;letter-spacing:-1.334px;">CRLF</span>
<span class="t" style="left:1115.6px;top:672.7px;line-height:18px;font-size:12px;color:#ccc;letter-spacing:0.417px;">{ }</span>
<span class="t" style="left:1136.7px;top:673.2px;line-height:18px;font-size:12px;color:#ccc;letter-spacing:-0.692px;">HTML</span>
<svg class="abs" style="left:1183px;top:674px" width="17" height="14" viewBox="0 0 17 14"><path d="M3 2.200C4.500 0.600 7 0.800 8.500 2.200C10 0.800 12.500 0.600 14 2.200C15 3.400 15 5 14.600 6.200L16.200 8.500V10.500C14.500 12.500 11.500 13.500 8.500 13.500S2.500 12.500 0.800 10.500V8.500L2.400 6.200C2 5 2 3.400 3 2.200Z" fill="#ccc"/><rect x="3.600" y="2.600" width="3.800" height="3.400" rx="1.400" fill="#181818"/><rect x="9.600" y="2.600" width="3.800" height="3.400" rx="1.400" fill="#181818"/><path d="M3.200 8.200H13.800V10.600C12 11.600 10.200 12 8.500 12S5 11.600 3.200 10.600Z" fill="#181818"/><rect x="6" y="8.800" width="1.500" height="2.200" fill="#ccc"/><rect x="9.500" y="8.800" width="1.500" height="2.200" fill="#ccc"/></svg>
<svg class="abs" style="left:1215px;top:673.5px" width="16" height="16" viewBox="0 0 16 16"><circle cx="7.900" cy="7.600" r="6.600" stroke="#ccc" stroke-width="1.250" fill="none"/><path d="M3.400 12.200L12.400 3" stroke="#ccc" stroke-width="1.250"/></svg>
<span class="t" style="left:1235.0px;top:673.2px;line-height:18px;font-size:12px;color:#ccc;letter-spacing:-0.264px;">Port : 5500</span>
<svg class="abs" style="left:1308px;top:674px" width="15" height="15" viewBox="0 0 15 15"><path d="M7 1.500C4.500 1.500 3 3.500 3 6V9.500L1.500 11.500H12.500L11 9.500V6" stroke="#ccc" stroke-width="1.250" fill="none" stroke-linejoin="round"/><path d="M5.500 12C5.800 13.300 8.200 13.300 8.500 12" stroke="#ccc" stroke-width="1.250" fill="none"/><circle cx="11.300" cy="3.200" r="2.600" fill="#ccc"/></svg>
<div id="taskbar" class="abs"></div>
<div class="abs" style="left:-16px;top:699px;width:32.5px;height:16px;border-radius:8px;background:#f3f6fa"></div>
<span class="t" style="left:-3.7px;top:698.9px;line-height:16px;font-size:11px;color:#1f1f1f;letter-spacing:0.089px;">24°</span>
<div class="abs" style="left:-2px;top:714.900px;width:9px;height:4.500px;background:#f5a623;border-radius:0 1px 0 0"></div>
<div class="abs" style="left:-8px;top:717.600px;width:17px;height:7.400px;border-radius:3.700px;background:linear-gradient(180deg,#c5daf7,#9fc0f2 60%,#6f9fe9)"></div>
<div class="abs" style="left:-3px;top:716px;width:7px;height:5px;border-radius:3px;background:#bcd4f6"></div>
<svg class="abs" style="left:306.8px;top:708.8px" width="15.6" height="15.6" viewBox="0 0 16 16"><defs><linearGradient id="wg" x1="0" y1="0" x2="1" y2="1"><stop offset="0" stop-color="#4cc2f5"/><stop offset="1" stop-color="#0a6ed1"/></linearGradient></defs><path d="M0 0H7.5V7.500H0ZM8.500 0H16V7.500H8.500ZM0 8.500H7.500V16H0ZM8.500 8.500H16V16H8.500Z" fill="url(#wg)"/></svg>
<div class="abs" style="left:332.800px;top:699.900px;width:219.700px;height:31.800px;border-radius:16px;background:#f5f8fc;border:1px solid #d0d9e4"></div>
<svg class="abs" style="left:344.500px;top:708.300px" width="16" height="16" viewBox="0 0 16 16"><circle cx="6.500" cy="6.500" r="5.200" stroke="#1f1f1f" stroke-width="1.500" fill="none"/><path d="M10.300 10.500L14.300 14.700" stroke="#1f1f1f" stroke-width="1.800" stroke-linecap="round"/></svg>
<span class="t" style="left:370.6px;top:706.9px;line-height:20px;font-size:13.5px;color:#595959;letter-spacing:-0.292px;">Pesquisar</span>
<div class="abs" style="left:567px;top:708.900px;width:12px;height:10px;border-radius:1px;background:#f6f6f6;box-shadow:0 0 1px rgba(0,0,0,.15)"></div>
<div class="abs" style="left:563px;top:712.600px;width:12px;height:10.600px;border-radius:1.500px;background:#262626"></div>
<div class="abs" style="left:567px;top:712.600px;width:8px;height:6.200px;background:#b9b9b9"></div>
<svg class="abs" style="left:594.500px;top:707.300px" width="17" height="15" viewBox="0 0 17 15"><defs><linearGradient id="cp1" x1="0" y1="0" x2="0" y2="1"><stop offset="0" stop-color="#1b8af0"/><stop offset=".5" stop-color="#2fc78d"/><stop offset="1" stop-color="#f6cf2e"/></linearGradient><linearGradient id="cp2" x1="1" y1="0" x2="0" y2="1"><stop offset="0" stop-color="#b14df0"/><stop offset=".5" stop-color="#f0529c"/><stop offset="1" stop-color="#f9702c"/></linearGradient></defs><path d="M4.500 0.500H10.500C11.800 0.500 12.300 1.500 12.600 2.600L10 3C9 3 8.500 3.600 8.200 4.600L6.800 9.200C6.500 10.200 5.800 10.500 4.800 10.500H2C0.500 10.500 0 9.200 0.400 7.800L2 2.500C2.400 1.200 3.200 0.500 4.500 0.500Z" fill="url(#cp1)"/><path d="M12.500 14.500H6.500C5.200 14.500 4.700 13.500 4.400 12.400L7 12C8 12 8.500 11.400 8.800 10.400L10.200 5.800C10.500 4.800 11.200 4.500 12.200 4.500H15C16.500 4.500 17 5.800 16.600 7.200L15 12.500C14.600 13.800 13.800 14.500 12.500 14.500Z" fill="url(#cp2)"/><path d="M7 0.500H10.500C11.800 0.500 12.300 1.500 12.600 2.600L13 4.500H12.200C11.200 4.500 10.500 4.800 10.200 5.800Z" fill="#1a56d6"/></svg>
<svg class="abs" style="left:626.800px;top:708.600px" width="16.500" height="14.600" viewBox="0 0 33 29"><path d="M0 3C0 1.500 1 0.500 2.500 0.500H12C13 0.500 13.600 1 14.200 1.800L16 4H30.500C32 4 33 5 33 6.500V9H0Z" fill="#e8a30c"/><path d="M0 6.500H33V26.500C33 28 32 29 30.500 29H2.500C1 29 0 28 0 26.500Z" fill="#ffce47"/><path d="M6 29V21.500C6 19.800 7.200 18.500 9 18.500H24C25.800 18.500 27 19.800 27 21.500V29Z" fill="#1180dd"/><rect x="10.500" y="22.500" width="12" height="2.600" rx="1.200" fill="#0a58a8"/></svg>
<svg class="abs" style="left:659px;top:708.600px" width="15.200" height="15.400" viewBox="0 0 30 31"><path d="M6.500 6V4.500C6.500 2.500 8 1.200 10 1.200H20C22 1.200 23.500 2.500 23.500 4.500V6" stroke="#38c3f2" stroke-width="2" fill="none"/><rect x="0" y="5" width="30" height="26" rx="4.500" fill="#1b4c88"/><rect x="8" y="11" width="6" height="6" fill="#f25022"/><rect x="16" y="11" width="6" height="6" fill="#7fba00"/><rect x="8" y="19" width="6" height="6" fill="#00a4ef"/><rect x="16" y="19" width="6" height="6" fill="#ffb900"/></svg>
<svg class="abs" style="left:691px;top:707.900px" width="16.200" height="16.200" viewBox="0 0 32 32"><defs><linearGradient id="ma" x1="0" y1="1" x2="1" y2="0"><stop offset="0" stop-color="#0b62d8"/><stop offset="1" stop-color="#2b86ee"/></linearGradient></defs><rect width="32" height="32" fill="url(#ma)"/><path d="M5 24L12.500 9H16.500L9 24ZM12.500 24L20 9H26.500V24H22.500V21H18L16.500 24ZM19.500 18H22.500V12Z" fill="#dbe8fb" opacity=".92"/></svg>
<svg class="abs" style="left:727.800px;top:710.200px" width="6.300" height="11.600" viewBox="0 0 14 24"><path d="M0 0H4.500V24H0Z" fill="#b00710"/><path d="M9.500 0H14V24H9.500Z" fill="#b00710"/><path d="M0 0H4.700L14 24H9.300Z" fill="#e30914"/></svg>
<svg class="abs" style="left:757px;top:707.700px" width="12.200" height="16.300" viewBox="0 0 24 32"><path d="M4 0V4M9.300 0V4M14.700 0V4M20 0V4" stroke="#1f89a8" stroke-width="2.600"/><rect x="0" y="2.500" width="24" height="27" fill="#5cc5e2"/><rect x="0" y="28.500" width="24" height="3.500" fill="#a34c12"/><rect x="0" y="26.500" width="24" height="2" fill="#f3f3f3"/><path d="M4 10H20M4 15.500H20M4 21H20" stroke="#0f7c97" stroke-width="2.600"/></svg>
<svg class="abs" style="left:786.800px;top:707.800px" width="16.400" height="16.400" viewBox="-50 -50 100 100"><circle r="50" fill="#fff"/><path d="M0 0L-43.300 -25A50 50 0 0 1 43.300 -25Z" fill="#ea4335"/><path d="M0 0L43.300 -25A50 50 0 0 1 0 50Z" fill="#fbbc04"/><path d="M0 0L0 50A50 50 0 0 1 -43.300 -25Z" fill="#34a853"/><path d="M-43.300 -25L-20 15L0 0Z" fill="#34a853"/><path d="M43.300 -25H-3L0 0Z" fill="#ea4335"/><path d="M0 50L21 12L0 0Z" fill="#fbbc04"/><circle r="23" fill="#fff"/><circle r="18" fill="#4285f4"/></svg>
<div class="abs" style="left:813.800px;top:696.900px;width:26.200px;height:38.300px;border-radius:4px;background:#eef3fb"></div>
<svg class="abs" style="left:818.7px;top:707.8px" width="16.3" height="16.3" viewBox="0 0 100 100"><path d="M96.5 10.8L75.9 0.9c-2.4-1.2-5.2-0.7-7.1 1.2L29.4 38.1 12.2 25c-1.6-1.2-3.8-1.1-5.3 0.2l-5.500 5c-1.8 1.700-1.800 4.500 0 6.200L16.300 50 1.400 63.600c-1.800 1.700-1.800 4.500 0 6.200l5.500 5c1.500 1.400 3.700 1.500 5.300 0.200l17.200-13 39.400 36c1.900 1.900 4.700 2.400 7.100 1.200l20.600-9.900c2.200-1 3.500-3.200 3.500-5.600V16.400c0-2.400-1.400-4.600-3.500-5.600zM75 72.700L45.100 50 75 27.300z" fill="#0a7bcc"/><path d="M68.800 97.900c1.900 1.900 4.700 2.400 7.100 1.200l20.600-9.900c2.200-1 3.500-3.200 3.500-5.600V16.400c0-2.400-1.400-4.600-3.500-5.600L75.900 0.900c-2.400-1.200-5.200-0.700-7.100 1.200 2.300-2.300 6.200-0.700 6.200 2.600v90.600c0 3.300-3.900 4.900-6.200 2.600z" fill="#25a7f2"/></svg>
<div class="abs" style="left:822px;top:732px;width:11px;height:2.800px;border-radius:1.400px;background:#0a6fd4"></div>
<svg class="abs" style="left:850.800px;top:707.800px" width="16.400" height="16.400" viewBox="0 0 32 32"><defs><linearGradient id="eg1" x1="0" y1="0" x2="1" y2="0"><stop offset="0" stop-color="#2aa6e8"/><stop offset=".5" stop-color="#35c1b4"/><stop offset="1" stop-color="#6fdb4a"/></linearGradient><linearGradient id="eg2" x1="0" y1="0" x2="1" y2="1"><stop offset="0" stop-color="#1b9de2"/><stop offset="1" stop-color="#0f5bb5"/></linearGradient></defs><circle cx="16" cy="16" r="16" fill="url(#eg2)"/><path d="M1 12C3 4 9.500 0 16 0C25 0 32 6.500 32 14C32 19 28.500 22 24.500 22C21 22 19 20.500 19 19C19 18 20 17.500 20 16C20 13 17 10.500 13 10.500C8 10.500 3 14 1 20Z" fill="url(#eg1)"/><path d="M13 10.500C9 12 7 16 7.500 20C8.500 27 14.500 31.500 21 31C25.500 30.500 29 28 31 24C28 26 24 26.500 20.500 25C16 23 14 19 15 15.500C15.500 13.500 17 12 18.500 11.500C17 10.800 15 10.300 13 10.500Z" fill="#154fa3"/><path d="M15 15.500C15.500 13.800 17 12.300 18.500 11.800C19.500 12.800 20 14.300 20 16C20 17.500 19 18 19 19C19 20.500 21 22 24.500 22C22 23 17 22 15 15.500Z" fill="#f2f8ff"/></svg>
<svg class="abs" style="left:882.900px;top:707.900px" width="16.200" height="16.200" viewBox="0 0 32 32"><rect width="32" height="32" fill="#0a74da"/><circle cx="16.400" cy="18.400" r="11.800" fill="#fff"/><circle cx="16.400" cy="18.400" r="4.600" fill="#0a74da"/><path d="M16.400 18.400L24.500 8.500" stroke="#0a74da" stroke-width="2.200"/><path d="M3 13L5 14M6 7.500L7.500 9M11 3.500L11.800 5.500M16.400 2.200V4.200M22 3.500L21.200 5.500M27 7.500L25.500 9M29.800 13L27.800 14M2.500 20H4.500M30.300 20H28.300" stroke="#cfe5fb" stroke-width="1.600"/></svg>
<svg class="abs" style="left:914.900px;top:707.500px" width="16.400" height="16.600" viewBox="0 0 32 33"><path d="M0 33V15C0 6.500 7 1 16 1S32 6.500 32 15V33Z" fill="#6e747b"/><path d="M24.500 3.500L28 0L31.500 3L28.500 6.500Z" fill="#4d5258"/><circle cx="16.400" cy="17.800" r="12.600" fill="#f4f4f2"/><path d="M16.400 17.800L8.500 11M16.400 17.800L24.500 10.500" stroke="#222" stroke-width="3" stroke-linecap="round"/><path d="M16.400 17.800V28" stroke="#f0501e" stroke-width="2.600"/><circle cx="16.400" cy="17.800" r="2.600" fill="#222"/></svg>
<div class="abs" style="left:632.8px;top:732.200px;width:4px;height:2.800px;border-radius:1.400px;background:#70757c"></div>
<div class="abs" style="left:792.9px;top:732.200px;width:4px;height:2.800px;border-radius:1.400px;background:#70757c"></div>
<div class="abs" style="left:856.9px;top:732.200px;width:4px;height:2.800px;border-radius:1.400px;background:#70757c"></div>
<div class="abs" style="left:888.9px;top:732.200px;width:4px;height:2.800px;border-radius:1.400px;background:#70757c"></div>
<div class="abs" style="left:921px;top:732.200px;width:4px;height:2.800px;border-radius:1.400px;background:#70757c"></div>
<svg class="abs" style="left:1007px;top:712px" width="12" height="8" viewBox="0 0 12 8"><path d="M1.300 6.400L6 1.700L10.700 6.400" stroke="#1c1c1c" stroke-width="1.400" fill="none" stroke-linecap="round" stroke-linejoin="round"/></svg>
<svg class="abs" style="left:1037px;top:709.900px" width="16.200" height="11.200" viewBox="0 0 16.200 11.200"><defs><linearGradient id="cl" x1="0.100" y1="0.300" x2="0.900" y2="0"><stop offset="0" stop-color="#bdbdbd"/><stop offset=".42" stop-color="#a9a9a9"/><stop offset=".5" stop-color="#e4e4e4"/><stop offset="1" stop-color="#efefef"/></linearGradient></defs><path d="M2.800 10.600C0.600 10.600 0.100 7.200 0.700 5.600C1.600 2.600 4.600 0.600 8 0.600C10 0.600 11 2 12.200 3.400C14 4.500 15.600 6 15.600 7.600C15.600 9.600 14 10.600 12.500 10.600Z" fill="url(#cl)" stroke="#1f1f1f" stroke-width="1"/></svg>
<svg class="abs" style="left:1068px;top:707px" width="18" height="18" viewBox="0 0 18 18"><path d="M1.300 9.500C1.300 4 6 1.300 9 1.300C11.500 1.300 13.800 2.600 15.500 5.300" stroke="#1c1c1c" stroke-width="1.100" fill="none"/><path d="M11.600 5.600H15.700V1.300" stroke="#1c1c1c" stroke-width="1.100" fill="none"/><path d="M6.700 12.100H2.400V16.700" stroke="#1c1c1c" stroke-width="1.100" fill="none"/><path d="M2.600 12.300C4 14.600 6 16 8.700 16.400" stroke="#1c1c1c" stroke-width="1.100" fill="none"/><circle cx="13" cy="13" r="3.900" fill="#ff9c0a"/></svg>
<span class="t" style="left:1104.8px;top:702.3px;line-height:15px;font-size:10.3px;color:#1c1c1c;letter-spacing:-0.173px;">POR</span>
<span class="t" style="left:1102.7px;top:718.3px;line-height:15px;font-size:10.3px;color:#1c1c1c;letter-spacing:-0.015px;">PTB2</span>
<svg class="abs" style="left:1144.500px;top:709.500px" width="17" height="12" viewBox="0 0 17 12"><path d="M0.800 4.300C5 -0.200 12 -0.200 16.200 4.300" stroke="#1c1c1c" stroke-width="1.200" fill="none" stroke-linecap="round"/><path d="M3.300 6.700C6 3.700 11 3.700 13.700 6.700" stroke="#1c1c1c" stroke-width="1.200" fill="none" stroke-linecap="round"/><path d="M5.800 9C7.200 7.400 9.800 7.400 11.200 9" stroke="#1c1c1c" stroke-width="1.200" fill="none" stroke-linecap="round"/><circle cx="8.500" cy="10.800" r="1.100" fill="#1c1c1c"/></svg>
<svg class="abs" style="left:1168.500px;top:709.800px" width="18" height="13" viewBox="0 0 18 13"><path d="M0.800 4.200H3.600L7.200 0.900V12.100L3.600 8.800H0.800Z" stroke="#1c1c1c" stroke-width="1.100" fill="none" stroke-linejoin="round"/><path d="M9.200 4C10.400 5.400 10.400 7.600 9.200 9" stroke="#444" stroke-width="1" fill="none"/><path d="M11.600 2.400C13.600 4.800 13.600 8.200 11.600 10.600" stroke="#8d96a1" stroke-width="0.900" fill="none"/><path d="M14 0.800C17 4.200 17 8.800 14 12.200" stroke="#b4bdc9" stroke-width="0.900" fill="none"/></svg>
<svg class="abs" style="left:1192.500px;top:710.500px" width="18" height="11" viewBox="0 0 18 11"><rect x="0.700" y="0.700" width="14" height="8.800" rx="2.200" stroke="#1c1c1c" stroke-width="1.200" fill="none"/><rect x="2.700" y="2.600" width="8.800" height="5" rx="0.800" fill="#1c1c1c"/><path d="M15.600 3.300C16.500 3.500 16.800 4.300 16.800 5.100C16.800 5.900 16.500 6.700 15.600 6.900Z" fill="#1c1c1c"/></svg>
<span class="t" style="left:1259.2px;top:699.8px;line-height:16px;font-size:10.8px;color:#1c1c1c;letter-spacing:0.295px;">01:03</span>
<span class="t" style="left:1226.0px;top:715.9px;line-height:16px;font-size:10.8px;color:#1c1c1c;letter-spacing:0.765px;">08/12/2025</span>
<svg class="abs" style="left:1296.500px;top:708.500px" width="14.500" height="16.500" viewBox="0 0 14.500 16.500"><path d="M0.400 12.200L2 10V5.200C2 2.400 3.800 0.500 6.400 0.500C9 0.500 10.800 2.400 10.800 5.200V10L12.400 12.200Z" fill="#111"/><path d="M4.200 13.600H8.600C8.200 15.600 4.600 15.600 4.200 13.600Z" fill="#111"/><path d="M4.400 4.800H8.200L4.400 8.500H8.400" stroke="#e3eaf3" stroke-width="1.100" fill="none"/><rect x="9.300" y="0" width="5.200" height="5.900" fill="#dae4f0"/><path d="M10.300 0.900H13.300L10.300 5H13.500" stroke="#111" stroke-width="1.200" fill="none"/></svg>
</body>
</html>
